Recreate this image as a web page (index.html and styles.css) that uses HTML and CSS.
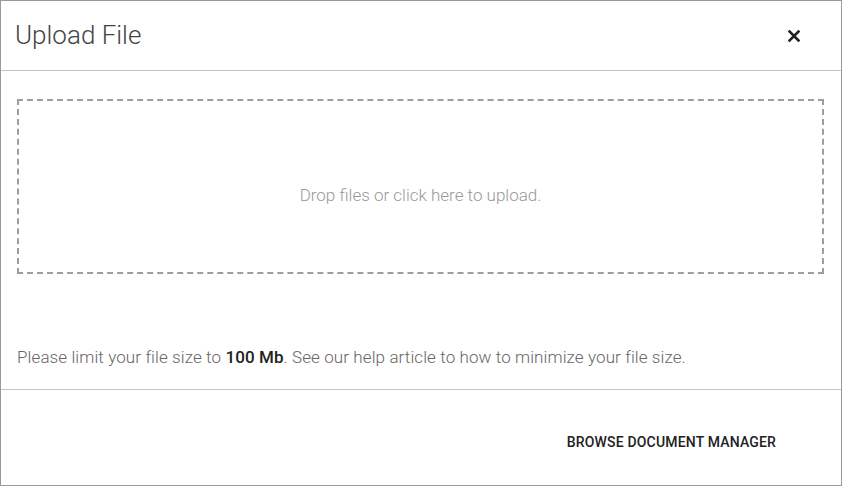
FILE: index.html
```html
<!DOCTYPE html>
<html>
<head>
<meta charset="utf-8">
<link rel="stylesheet" href="styles.css">
</head>
<body>
<div class="dialog">
  <div class="header">
    <h1 class="title">Upload File</h1>
    <button class="close" aria-label="Close">
      <svg width="12" height="12" viewBox="0 0 12 12"><path d="M1.5 1.5 L10.5 10.5 M10.5 1.5 L1.5 10.5" stroke="#222" stroke-width="2.6" stroke-linecap="square"/></svg>
    </button>
  </div>
  <div class="body">
    <div class="dropzone">Drop files or click here to upload.</div>
    <p class="note">Please limit your file size to <b>100 Mb</b>. See our help article to how to minimize your file size.</p>
  </div>
  <div class="footer">
    <button class="browse">Browse Document Manager</button>
  </div>
</div>
</body>
</html>
```
FILE: styles.css
```css
html, body { margin: 0; padding: 0; background: #fff; }
body { font-family: Roboto, "Liberation Sans", sans-serif; }
.dialog {
  width: 842px; height: 486px; box-sizing: border-box;
  border: 1px solid #9a9a9a;
  display: flex; flex-direction: column;
}
.header {
  height: 70px; box-sizing: border-box;
  border-bottom: 1px solid #c4c4c4;
  display: flex; align-items: center; justify-content: space-between;
  padding: 0 41px 0 14px;
}
.title { margin: 0; font-size: 26px; font-weight: 300; color: #444; padding-bottom: 2px; }
.close { background: none; border: 0; padding: 0; width: 12px; height: 12px; display: flex; cursor: pointer; }
.body {
  height: 319px; box-sizing: border-box;
  border-bottom: 1px solid #c4c4c4;
  padding: 28px 17px 0 16px;
  display: flex; flex-direction: column;
}
.dropzone {
  height: 175px; box-sizing: border-box;
  border: 2px dashed #9e9e9e;
  display: flex; align-items: center; justify-content: center;
  font-size: 17px; font-weight: 300; color: #999;
  padding-top: 16px;
}
.note { margin: 73px 0 0 0; font-size: 17px; font-weight: 300; color: #666; line-height: 20px; letter-spacing: 0.1px; }
.note b { font-weight: 500; color: #222; }
.footer { flex: 1; display: flex; align-items: center; justify-content: flex-end; padding-right: 65px; }
.browse {
  background: none; border: 0; padding: 0;
  font-family: Roboto, "Liberation Sans", sans-serif;
  font-size: 14px; font-weight: 500; text-transform: uppercase; color: #222;
  letter-spacing: 0.17px; margin-top: 8px;
}
```
